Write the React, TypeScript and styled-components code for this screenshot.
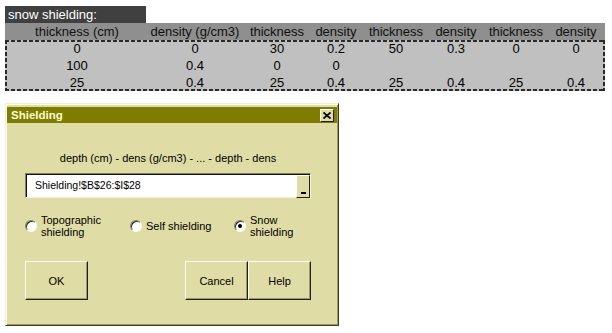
import React from "react";
import styled, { createGlobalStyle } from "styled-components";

const Global = createGlobalStyle`
  html, body { margin: 0; padding: 0; background: #ffffff; }
  body { font-family: "Liberation Sans", Arial, sans-serif; }
`;

const Page = styled.div`
  padding: 6px 0 0 5px;
  width: 612px;
  height: 333px;
  box-sizing: border-box;
  overflow: hidden;
`;

const Sheet = styled.div`
  width: 600px;
  font-size: 13px;
  color: #000;
`;

const LabelCell = styled.div`
  width: 141px;
  height: 17px;
  line-height: 17px;
  background: #404040;
  color: #ffffff;
  padding-left: 3px;
  box-sizing: border-box;
`;

const cols = "144px 92px 72px 46px 74px 46px 74px 46px";

const HeaderRow = styled.div`
  display: grid;
  grid-template-columns: ${cols};
  height: 17px;
  line-height: 17px;
  background: #8e8f8e;
  color: #101010;
`;

const dash = "#2a2a2a";
const DataBlock = styled.div`
  background:
    repeating-linear-gradient(90deg, ${dash} 0 4px, transparent 4px 6px) left top / 100% 2px no-repeat,
    repeating-linear-gradient(90deg, ${dash} 0 4px, transparent 4px 6px) left bottom / 100% 2px no-repeat,
    repeating-linear-gradient(180deg, ${dash} 0 4px, transparent 4px 6px) left top / 2px 100% no-repeat,
    repeating-linear-gradient(180deg, ${dash} 0 4px, transparent 4px 6px) right top / 2px 100% no-repeat,
    #c0c0c0;
`;

const DataRow = styled.div`
  display: grid;
  grid-template-columns: ${cols};
  height: 17px;
  line-height: 17px;
`;

const Cell = styled.div`
  text-align: center;
  white-space: nowrap;
`;

const Dialog = styled.div`
  margin-top: 12px;
  width: 334px;
  height: 223px;
  box-sizing: border-box;
  background: #dfdca6;
  border: 1px solid;
  border-color: #f2f0cc #3c3c18 #3c3c18 #f2f0cc;
  box-shadow: inset 1px 1px #fffff4, inset -1px -1px #9c9a6c;
  padding: 3px 1px 1px 1px;
  font-size: 11px;
  color: #000;
`;

const TitleBar = styled.div`
  height: 16px;
  background: #7e7d00;
  display: flex;
  align-items: center;
  justify-content: space-between;
  padding: 0 3px 0 4px;
`;

const TitleText = styled.span`
  color: #fcfcd0;
  font-weight: bold;
  font-size: 11.5px;
`;

const CloseButton = styled.div`
  width: 14px;
  height: 13px;
  box-sizing: border-box;
  background: #dfdca6;
  border: 1px solid;
  border-color: #fffff4 #202010 #202010 #fffff4;
  display: flex;
  align-items: center;
  justify-content: center;
`;

const Body = styled.div`
  padding: 28px 26px 0 18px;
`;

const Prompt = styled.div`
  height: 14px;
  line-height: 14px;
  text-align: center;
`;

const InputBox = styled.div`
  margin-top: 8px;
  height: 25px;
  box-sizing: border-box;
  background: #ffffff;
  border: 1px solid;
  border-color: #80805c #f4f2d0 #f4f2d0 #80805c;
  box-shadow: inset 1px 1px #101010;
  display: flex;
  align-items: center;
  justify-content: space-between;
  padding: 1px 0 0 9px;
`;

const InputText = styled.span`
  line-height: 14px;
  font-size: 10.5px;
  padding-bottom: 2px;
`;

const RefButton = styled.div`
  width: 14px;
  height: 23px;
  box-sizing: border-box;
  background: #dfdca6;
  border: 1px solid;
  border-color: #fffff4 #202010 #202010 #fffff4;
  display: flex;
  align-items: flex-end;
  justify-content: center;
  padding-bottom: 3px;
`;

const RefMark = styled.div`
  width: 5px;
  height: 2px;
  background: #000;
`;

const RadioGroup = styled.div`
  margin-top: 16px;
  display: grid;
  grid-template-columns: 105px 104px auto;
`;

const RadioItem = styled.label`
  display: flex;
  align-items: center;
  gap: 4px;
  height: 24px;
`;

const RadioCircle = styled.span<{ $checked?: boolean }>`
  width: 12px;
  height: 12px;
  box-sizing: border-box;
  border-radius: 50%;
  background: #ffffff;
  border: 1px solid;
  border-color: #808060 #fffff4 #fffff4 #808060;
  box-shadow: inset 1px 1px #303020;
  flex: none;
  display: flex;
  align-items: center;
  justify-content: center;
  &::after {
    content: "";
    display: ${(p) => (p.$checked ? "block" : "none")};
    width: 4px;
    height: 4px;
    border-radius: 50%;
    background: #000;
  }
`;

const RadioText = styled.span`
  line-height: 12px;
`;

const ButtonRow = styled.div`
  margin-top: 23px;
  display: flex;
  justify-content: space-between;
`;

const ButtonPair = styled.div`
  display: flex;
`;

const Button = styled.div`
  width: 63px;
  height: 39px;
  box-sizing: border-box;
  background: #dfdca6;
  border: 1px solid;
  border-color: #fffff4 #202010 #202010 #fffff4;
  box-shadow: inset -1px -1px #9c9a6c;
  display: flex;
  align-items: center;
  justify-content: center;
`;

const headers = ["thickness (cm)", "density (g/cm3)", "thickness", "density", "thickness", "density", "thickness", "density"];
const rows = [
  ["0", "0", "30", "0.2", "50", "0.3", "0", "0"],
  ["100", "0.4", "0", "0", "", "", "", ""],
  ["25", "0.4", "25", "0.4", "25", "0.4", "25", "0.4"],
];

export default function App() {
  return (
    <Page>
      <Global />
      <Sheet>
        <LabelCell>snow shielding:</LabelCell>
        <HeaderRow>
          {headers.map((h, i) => (
            <Cell key={i}>{h}</Cell>
          ))}
        </HeaderRow>
        <DataBlock>
          {rows.map((r, ri) => (
            <DataRow key={ri}>
              {r.map((v, ci) => (
                <Cell key={ci}>{v}</Cell>
              ))}
            </DataRow>
          ))}
        </DataBlock>
      </Sheet>
      <Dialog>
        <TitleBar>
          <TitleText>Shielding</TitleText>
          <CloseButton>
            <svg width="8" height="7" viewBox="0 0 8 7">
              <path d="M0.5 0.5 L7.5 6.5 M7.5 0.5 L0.5 6.5" stroke="#000" strokeWidth="1.7" fill="none" />
            </svg>
          </CloseButton>
        </TitleBar>
        <Body>
          <Prompt>depth (cm) - dens (g/cm3) - ... - depth - dens</Prompt>
          <InputBox>
            <InputText>Shielding!$B$26:$I$28</InputText>
            <RefButton>
              <RefMark />
            </RefButton>
          </InputBox>
          <RadioGroup>
            <RadioItem>
              <RadioCircle />
              <RadioText>
                Topographic
                <br />
                shielding
              </RadioText>
            </RadioItem>
            <RadioItem>
              <RadioCircle />
              <RadioText>Self shielding</RadioText>
            </RadioItem>
            <RadioItem>
              <RadioCircle $checked />
              <RadioText>
                Snow
                <br />
                shielding
              </RadioText>
            </RadioItem>
          </RadioGroup>
          <ButtonRow>
            <Button>OK</Button>
            <ButtonPair>
              <Button>Cancel</Button>
              <Button>Help</Button>
            </ButtonPair>
          </ButtonRow>
        </Body>
      </Dialog>
    </Page>
  );
}
